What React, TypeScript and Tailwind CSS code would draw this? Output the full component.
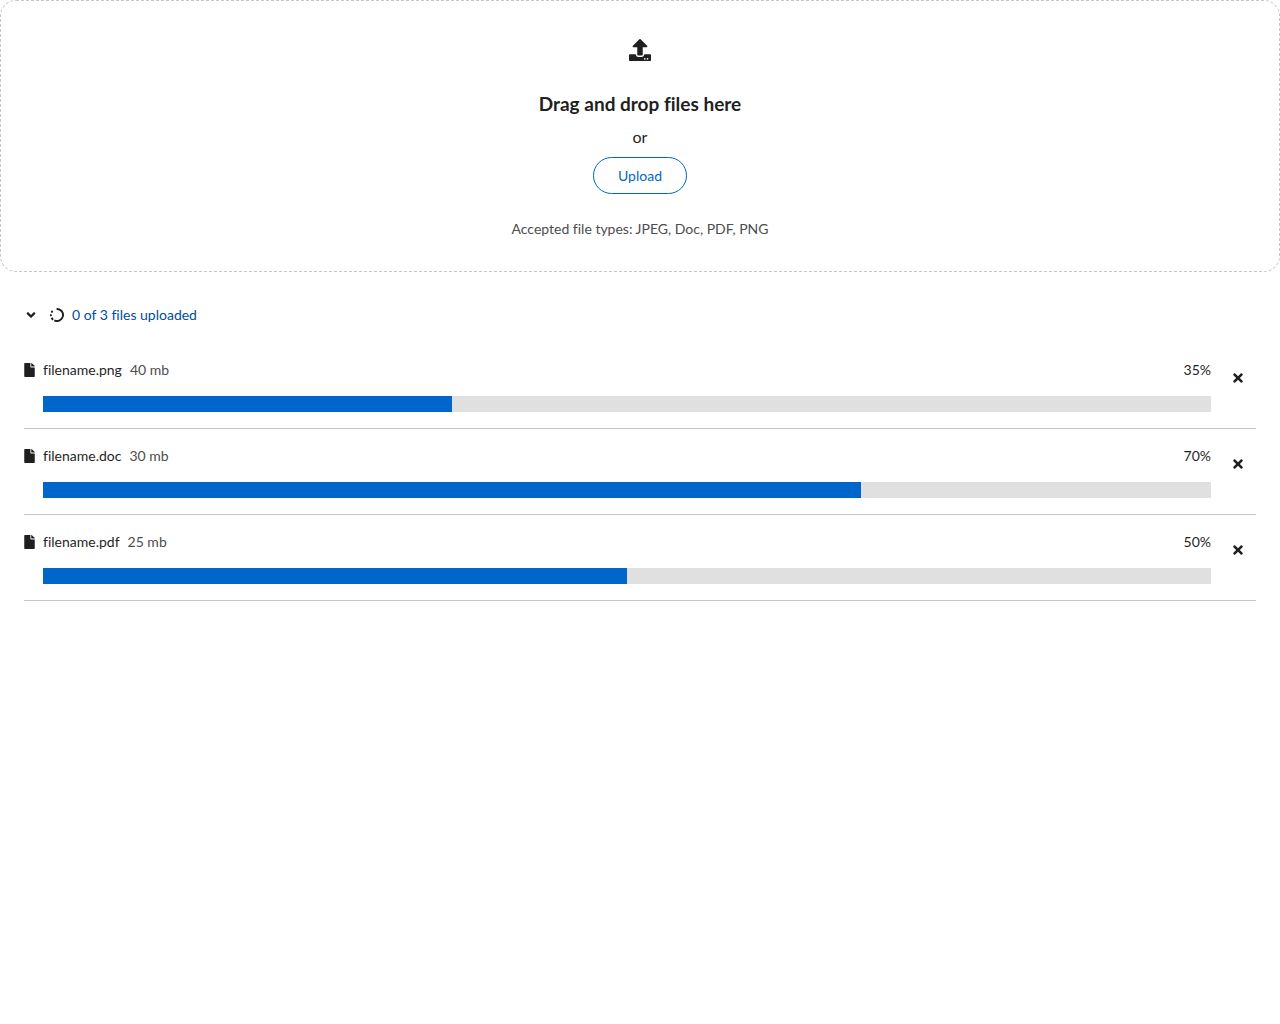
import { useState } from "react";
import { FaAngleDown, FaFile, FaTimes, FaUpload } from "react-icons/fa";

type UploadFile = { name: string; size: string; progress: number };

const initialFiles: UploadFile[] = [
  { name: "filename.png", size: "40 mb", progress: 35 },
  { name: "filename.doc", size: "30 mb", progress: 70 },
  { name: "filename.pdf", size: "25 mb", progress: 50 },
];

function InProgressIcon() {
  return (
    <svg viewBox="0 0 14 14" className="size-3.5 shrink-0" fill="none" stroke="#1f1f1f" strokeWidth="1.9" aria-hidden="true">
      <path d="M6.6 0.95A6.05 6.05 0 1 1 4.3 12.4" />
      <path d="M3.1 11.7A6.05 6.05 0 0 1 1.6 9.8" />
      <path d="M1 8.1A6.05 6.05 0 0 1 1 6.3" />
      <path d="M1.5 4.6A6.05 6.05 0 0 1 2.6 2.9" />
    </svg>
  );
}

function DropZone() {
  return (
    <section className="flex flex-col items-center rounded-2xl border border-dashed border-[#c7c7c7] p-8 text-center">
      <div className="flex h-[34px] items-center">
        <FaUpload className="size-[22px]" aria-hidden="true" />
      </div>
      <h1 className="mt-6 text-[19px] leading-[26px] font-bold">Drag and drop files here</h1>
      <p className="mt-2 text-[16px] leading-6">or</p>
      <button type="button" className="mt-2 rounded-full border border-[#0066cc] px-6 py-[7px] leading-[21px] text-[#0066cc]">
        Upload
      </button>
      <p className="mt-6 leading-[21px] text-[#4d4d4d]">Accepted file types: JPEG, Doc, PDF, PNG</p>
    </section>
  );
}

function FileRow({ file, onRemove }: { file: UploadFile; onRemove: () => void }) {
  return (
    <li className="flex items-start gap-2 border-b border-[#c7c7c7] py-4">
      <div className="flex min-w-0 flex-1 gap-2">
        <FaFile className="mt-1 h-3.5 w-[11px] shrink-0" aria-hidden="true" />
        <div className="min-w-0 flex-1">
          <div className="flex gap-2 leading-[21px]">
            <span>{file.name}</span>
            <span className="text-[#4d4d4d]">{file.size}</span>
            <span className="ml-auto">{file.progress}%</span>
          </div>
          <div
            role="progressbar"
            aria-label={file.name}
            aria-valuemin={0}
            aria-valuemax={100}
            aria-valuenow={file.progress}
            className="mt-4 h-4 bg-[#e0e0e0]"
          >
            <div className="h-full bg-[#0066cc]" style={{ width: `${file.progress}%` }} />
          </div>
        </div>
      </div>
      <button type="button" aria-label={`Remove ${file.name}`} className="flex size-[37px] items-center justify-center">
        <FaTimes className="size-3.5" aria-hidden="true" />
      </button>
    </li>
  );
}

export default function App() {
  const [open, setOpen] = useState(true);
  const [files, setFiles] = useState(initialFiles);
  return (
    <main className="bg-white font-['Lato',sans-serif] text-[14px] text-[#1f1f1f] [font-variant-ligatures:none]">
      <DropZone />
      <section className="px-6 pt-6">
        <button type="button" aria-expanded={open} onClick={() => setOpen(!open)} className="flex h-[37px] items-center">
          <FaAngleDown className="size-3.5" aria-hidden="true" />
          <span className="ml-3 flex items-center gap-2">
            <InProgressIcon />
            <span className="leading-[21px] text-[#004d99]">0 of 3 files uploaded</span>
          </span>
        </button>
        {open && (
          <ul className="mt-2.5">
            {files.map((file) => (
              <FileRow key={file.name} file={file} onRemove={() => setFiles(files.filter((f) => f !== file))} />
            ))}
          </ul>
        )}
      </section>
    </main>
  );
}
